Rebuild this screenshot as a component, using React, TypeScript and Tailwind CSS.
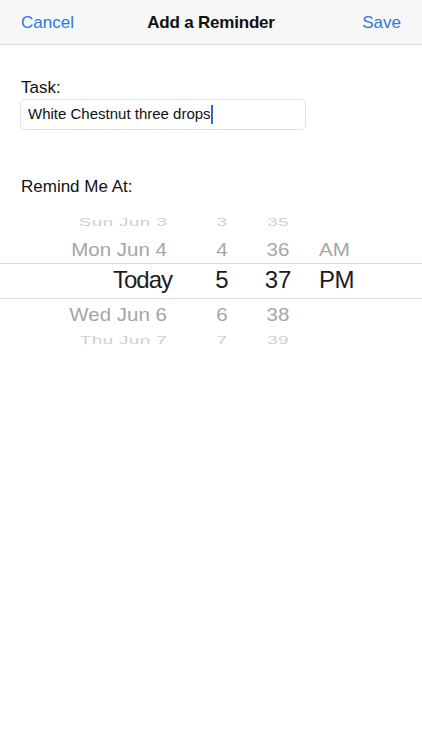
import React from 'react';

const font = { fontFamily: '"Liberation Sans", Arial, sans-serif' };

type Row = {
  date: string;
  hour: string;
  minute: string;
  ampm: string;
  kind: 'far' | 'near' | 'selected';
};

const ROWS: Row[] = [
  { date: 'Sun Jun 3', hour: '3', minute: '35', ampm: '', kind: 'far' },
  { date: 'Mon Jun 4', hour: '4', minute: '36', ampm: 'AM', kind: 'near' },
  { date: 'Today', hour: '5', minute: '37', ampm: 'PM', kind: 'selected' },
  { date: 'Wed Jun 6', hour: '6', minute: '38', ampm: '', kind: 'near' },
  { date: 'Thu Jun 7', hour: '7', minute: '39', ampm: '', kind: 'far' },
];

// one wheel row: date right-aligned, hour centred at 222, minute at 278, am/pm from 319
const PickerRow = ({ row }: { row: Row }) => {
  const selected = row.kind === 'selected';
  const near = row.kind === 'near';
  const rowClass = selected
    ? 'flex h-[36px] items-center border-y border-[#dcdcdc] text-[24px] text-[#1c1c1c] pb-[2px]'
    : near
      ? 'flex h-[29px] items-center pt-[3px] text-[20.5px] text-[#a6a6a6] scale-y-[0.9]'
      : 'flex h-[24px] items-center text-[19px] tracking-[0.3px] text-[#d0d0d0] scale-y-[0.62]';

  return (
    <div className={rowClass}>
      <div className={selected ? 'w-[172px] text-right tracking-[-1px]' : 'w-[172px] pr-[5px] text-right'}>
        {row.date}
      </div>
      <div className="flex w-[100px] justify-center">{row.hour}</div>
      <div className="flex w-[12px] justify-center">{row.minute}</div>
      <div className={selected ? 'pl-[35px] tracking-[-0.5px]' : 'pl-[35px]'}>{row.ampm}</div>
    </div>
  );
};

export default function App() {
  return (
    <div className="h-[750px] w-[422px] overflow-hidden bg-white" style={font}>
      <div className="grid h-[45px] grid-cols-[1fr_auto_1fr] items-center border-b border-[#dcdcdc] bg-[#f7f7f7] px-[21px] pt-[2px] text-[17px]">
        <span className="text-[#2a7ae0]">Cancel</span>
        <span className="font-bold tracking-[-0.2px] text-[#111]">Add a Reminder</span>
        <span className="text-right text-[#2a7ae0]">Save</span>
      </div>

      <div className="px-[20px] pt-[33px]">
        <div className="pl-[1px] text-[17px] leading-[20px] text-[#111]">Task:</div>
        <div className="mt-[1px] flex h-[31px] w-[286px] items-center rounded-[5px] border border-[#e3e3e3] px-[7px] text-[15px] text-[#111]">
          <span>White Chestnut three drops</span>
          <span className="h-[19px] w-[2px] bg-[#3b62d6]" />
        </div>

        <div className="mt-[47px] pl-[1px] text-[17px] leading-[20px] text-[#111]">Remind Me At:</div>
      </div>

      <div className="mt-[13px] flex flex-col">
        {ROWS.map((row) => (
          <PickerRow key={row.date} row={row} />
        ))}
      </div>
    </div>
  );
}
